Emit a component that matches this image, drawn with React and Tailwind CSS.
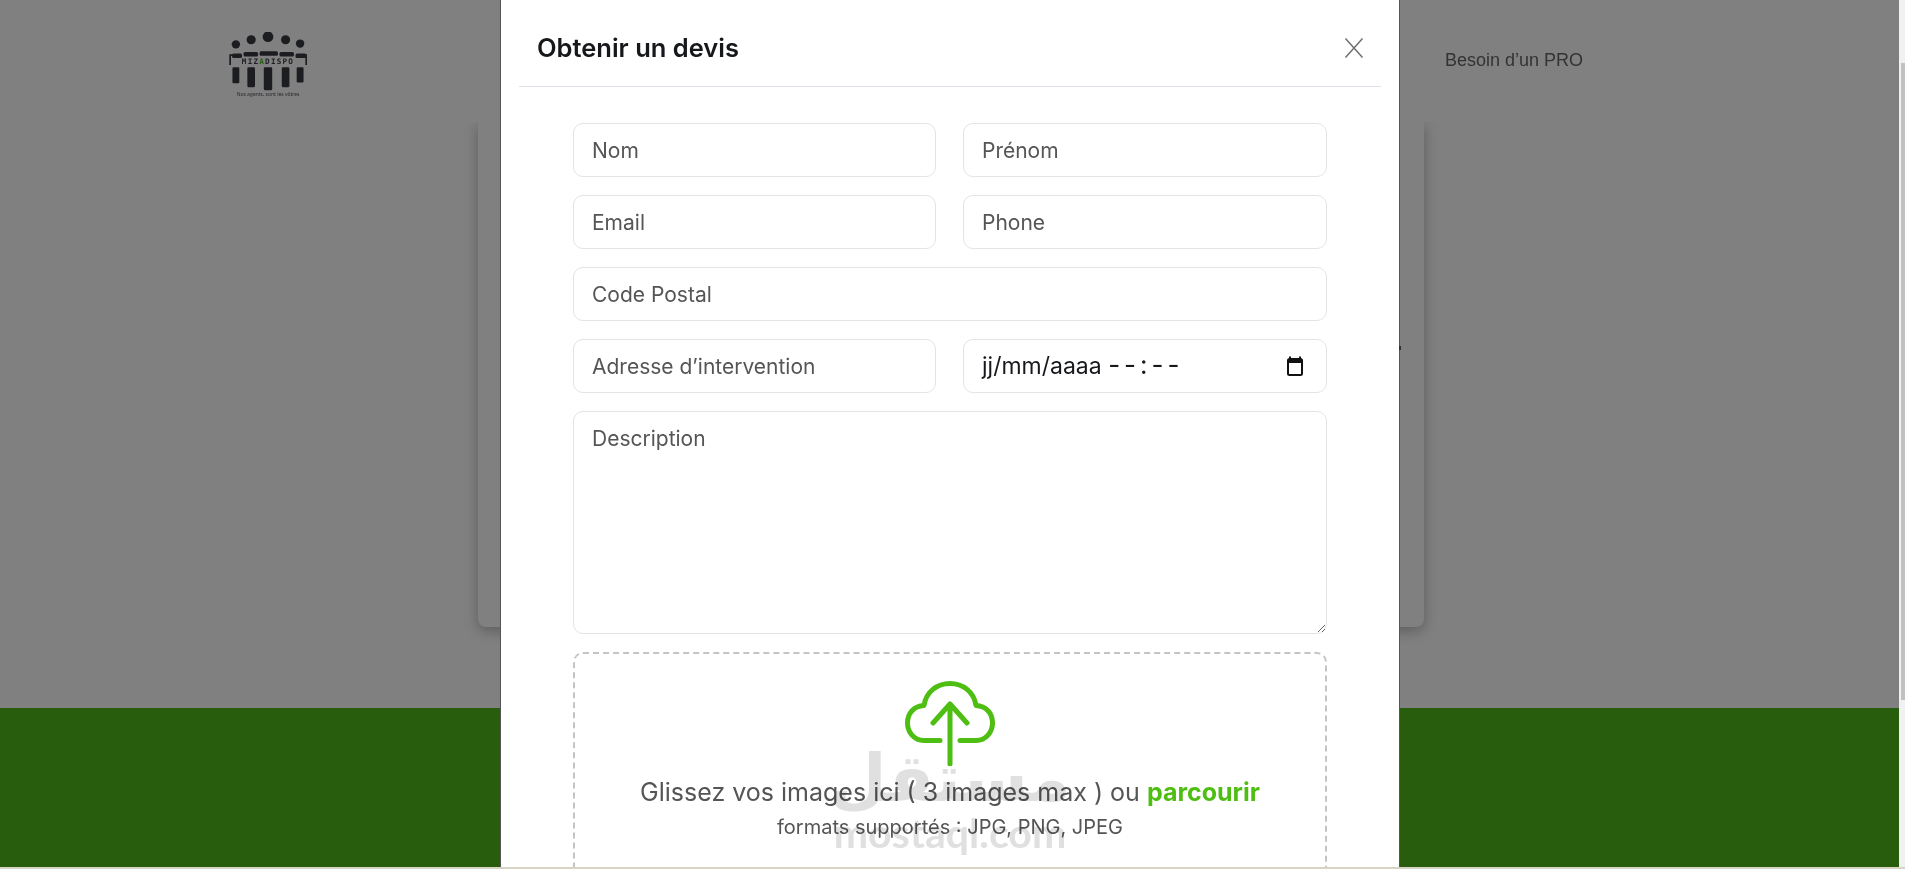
const fontStack = "font-['Inter',sans-serif]";

function Logo() {
  const heads = [[17, 34, 5.5], [37, 28, 6], [59, 24, 7], [82, 28, 6], [101, 33, 5.5]];
  const shoulders = [[12, 46, 13], [27, 44, 19], [48, 43, 24], [74, 44, 19], [95, 46, 14]];
  const legs = [[17, 64, 9, 21], [37, 64, 10, 26], [59, 64, 11, 30], [82, 64, 10, 26], [101, 64, 9, 20]];
  return (
    <svg width="78" height="66" viewBox="8 18 102 86" className="block">
      {heads.map(([x, y, r]) => <circle key={x} cx={x} cy={y} r={r} fill="#1c1d20" />)}
      {shoulders.map(([x, y, w]) => <rect key={x} x={x} y={y} width={w} height={6} rx="2" fill="#1c1d20" />)}
      <path d="M9.5 61 V48 H14 M109 61 V48 H104" fill="none" stroke="#1c1d20" strokeWidth="2.2" />
      {legs.map(([x, y, w, h]) => <rect key={x} x={x - w / 2} y={y} width={w} height={h} rx="1.5" fill="#1c1d20" />)}
      <text x="59" y="60" textAnchor="middle" fontSize="10" fontWeight="800" letterSpacing="1.6" fill="#1c1d20" fontFamily="'DejaVu Sans Mono', monospace">MIZ<tspan fill="#245c10">A</tspan>DISPO</text>
      <text x="59" y="101" textAnchor="middle" fontSize="6.5" fill="#2a2a30" fontFamily="'Noto Sans', sans-serif">Nos agents, sont les vôtres</text>
    </svg>
  );
}

function Field({ placeholder, className = "" }) {
  return (
    <input
      placeholder={placeholder}
      className={`h-[54px] w-full min-w-0 rounded-[10px] border border-[#e2e4e8] bg-white px-[18px] text-[21px] text-[#555] placeholder:text-[#555] outline-none ${className}`}
    />
  );
}

function Background() {
  return (
    <div className="flex h-full flex-col bg-[#808080]">
      <header className="relative z-10 flex h-[122px] shrink-0 items-start justify-between bg-[#808080] pl-[229px] pr-[316px]">
        <div className="pt-[32px]"><Logo /></div>
        <span className="pt-[47px] font-['Liberation_Sans',sans-serif] text-[18px] text-[#333]">Besoin d’un PRO</span>
      </header>
      <div className="flex flex-1 justify-center">
        <div className="ml-[3px] h-[505px] w-[946px] rounded-b-[8px] bg-[#808080] shadow-[0_4px_14px_rgba(0,0,0,0.28)]" />
      </div>
      <div className="h-[159px] shrink-0 bg-[#275d0c]" />
    </div>
  );
}

function Watermark() {
  return (
    <div className="pointer-events-none absolute left-[820px] top-[744px] z-30 flex w-[260px] flex-col items-center text-[#d8d8d8] opacity-80 mix-blend-multiply">
      <span className="font-['DejaVu_Sans',sans-serif] text-[66px] font-bold leading-[70px]">مستقل</span>
      <span className="font-['Lato',sans-serif] text-[41px] font-bold leading-[38px]">mostaql.com</span>
    </div>
  );
}

function Modal() {
  return (
    <div className={`absolute left-[500px] top-0 z-20 h-[867px] w-[900px] overflow-hidden border-x border-[#555] bg-white ${fontStack}`}>
      <div className="mx-[18px] flex h-[87px] items-center justify-between border-b border-[#e0e0e8] pl-[18px] pr-[17px] pt-[10px]">
        <h2 className="text-[25.5px] font-semibold text-[#16181c]">Obtenir un devis</h2>
        <svg width="20" height="20" viewBox="0 0 20 20" fill="none" stroke="#6f6f6f" strokeWidth="1.5">
          <path d="M1.5 0.5 L18.5 19.5 M18.5 0.5 L1.5 19.5" />
        </svg>
      </div>
      <div className="flex flex-col gap-[18px] px-[72px] pt-[36px]">
        <div className="grid grid-cols-[362.5px_364px] gap-x-[27.5px]"><Field placeholder="Nom" /><Field placeholder="Prénom" /></div>
        <div className="grid grid-cols-[362.5px_364px] gap-x-[27.5px]"><Field placeholder="Email" /><Field placeholder="Phone" /></div>
        <Field placeholder="Code Postal" />
        <div className="grid grid-cols-[362.5px_364px] gap-x-[27.5px]">
          <Field placeholder="Adresse d’intervention" />
          <div className="flex h-[54px] items-center justify-between rounded-[10px] border border-[#e2e4e8] bg-white pl-[18px] pr-[22px] text-[23px] text-[#16181c]">
            <span className="whitespace-nowrap">jj/mm/aaaa <span className="text-[26px] leading-none tracking-[4px]">--:--</span></span>
            <svg width="18" height="20" viewBox="0 0 18 20" fill="none">
              <path d="M4 0.5 V3 M14 0.5 V3" stroke="#111" strokeWidth="2" />
              <rect x="2" y="3" width="14" height="16" rx="1.5" stroke="#111" strokeWidth="2" />
              <rect x="2" y="3" width="14" height="4" fill="#111" />
            </svg>
          </div>
        </div>
        <textarea
          placeholder="Description"
          className="h-[223px] w-full rounded-[10px] border border-[#e2e4e8] bg-white px-[18px] py-[11px] text-[21px] text-[#555] placeholder:text-[#555] outline-none"
        />
        <div className="flex h-[260px] flex-col items-center rounded-[10px] border-2 border-dashed border-[#c4c4c4] pt-[26px]">
          <svg width="92" height="86" viewBox="0 0 92 86" fill="none" stroke="#4fbe12" strokeWidth="5" strokeLinecap="round" strokeLinejoin="round">
            <path d="M36 60.5 H20 C10 60.5 3.5 52 3.5 43 C3.5 33 10 26 20 25.5 C22 12 33 3.5 46 3.5 C59 3.5 70 12 72 25.5 C82 26 88.5 33 88.5 43 C88.5 52 82 60.5 72 60.5 H56" />
            <path d="M46 84 V24 M29 43 L46 24 L63 43" />
          </svg>
          <p className="mt-[9px] text-[25px] leading-[34px] text-[#555]">
            Glissez vos images ici ( 3 images max ) ou <span className="font-bold text-[#4fbe12]">parcourir</span>
          </p>
          <p className="mt-[4px] text-[20px] leading-[28px] text-[#555]">formats supportés : JPG, PNG, JPEG</p>
        </div>
      </div>
    </div>
  );
}

export default function App() {
  return (
    <div className="relative flex h-[869px] w-[1905px] flex-col overflow-hidden bg-[#f1f1f1]">
      <div className="relative h-[867px] w-full">
        <div className="h-full w-[1899px]"><Background /></div>
        <Modal />
        <Watermark />
        <div className="absolute left-[1399px] top-[346px] z-30 h-[4px] w-[2px] bg-[#333]" />
        <div className="absolute right-0 top-[63px] h-[637px] w-[4px] bg-[#c1c1c1]" />
      </div>
      <div className="h-[2px] shrink-0 bg-[#d8d4c4]" />
    </div>
  );
}
